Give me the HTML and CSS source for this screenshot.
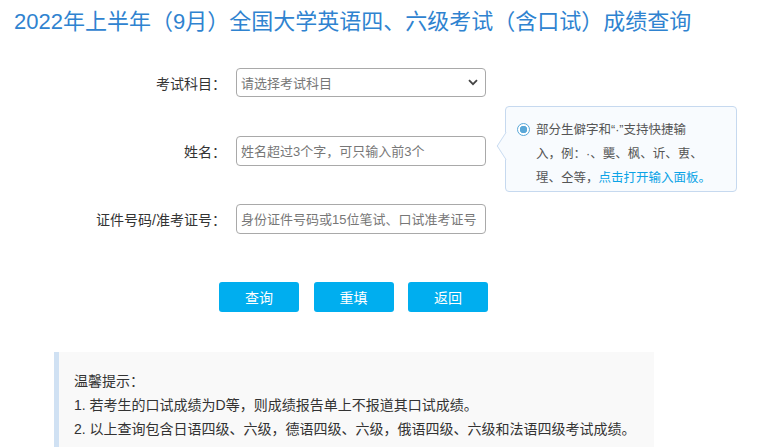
FILE: index.html
```html
<!DOCTYPE html>
<html lang="zh-CN">
<head>
<meta charset="utf-8">
<title>成绩查询</title>
<link rel="stylesheet" href="styles.css">
</head>
<body>
<h1 class="title">2022年上半年（9月）全国大学英语四、六级考试（含口试）成绩查询</h1>
<form class="form">
  <div class="row">
    <label class="label">考试科目：</label>
    <div class="field">
      <div class="select">
        <span class="ph">请选择考试科目</span>
        <svg class="chev" width="10" height="7" viewBox="0 0 10 7"><path d="M1 1.2 L5 5.2 L9 1.2" fill="none" stroke="#444" stroke-width="1.8"/></svg>
      </div>
    </div>
  </div>
  <div class="row">
    <label class="label">姓名：</label>
    <div class="field">
      <input class="input" type="text" placeholder="姓名超过3个字，可只输入前3个">
      <div class="tip">
        <span class="arrow"></span>
        <div class="tip-text"><span class="radio"></span><span class="tl">部分生僻字和“·”支持快捷输</span><span class="tl">入，例：·、龑、枫、䜣、叀、</span><span class="tl">瑆、仝等，<a class="link">点击打开输入面板。</a></span></div>
      </div>
    </div>
  </div>
  <div class="row">
    <label class="label">证件号码/准考证号：</label>
    <div class="field">
      <input class="input" type="text" placeholder="身份证件号码或15位笔试、口试准考证号">
    </div>
  </div>
  <div class="buttons">
    <button type="button" class="btn">查询</button>
    <button type="button" class="btn">重填</button>
    <button type="button" class="btn">返回</button>
  </div>
</form>
<div class="notice">
  <p>温馨提示：</p>
  <p>1. 若考生的口试成绩为D等，则成绩报告单上不报道其口试成绩。</p>
  <p>2. 以上查询包含日语四级、六级，德语四级、六级，俄语四级、六级和法语四级考试成绩。</p>
</div>
</body>
</html>
```
FILE: styles.css
```css
* { box-sizing: border-box; }
body {
  margin: 0;
  background: #fff;
  font-family: "Liberation Sans", "Noto Sans CJK SC", sans-serif;
  color: #333;
  overflow: hidden;
  text-spacing-trim: space-all;
}
.title {
  margin: 0;
  padding: 9px 0 0 14px;
  height: 36px;
  font-size: 22px;
  line-height: 26px;
  font-weight: normal;
  color: #2f83d0;
  white-space: nowrap;
}
.form {
  margin-top: 32px;
}
.row {
  display: grid;
  grid-template-columns: 226px 250px;
  column-gap: 10px;
  align-items: center;
  height: 30px;
  margin-bottom: 38px;
}
.label {
  text-align: right;
  font-size: 14px;
  color: #333;
}
.field {
  position: relative;
  height: 30px;
}
.select {
  height: 29px;
  border: 1px solid #a9a9a9;
  border-radius: 4px;
  display: flex;
  align-items: center;
  justify-content: space-between;
  padding: 0 7px 0 4px;
  font-size: 13px;
  color: #777;
}
.input {
  width: 250px;
  height: 30px;
  border: 1px solid #a9a9a9;
  border-radius: 4px;
  padding: 0 4px;
  font-family: inherit;
  font-size: 13px;
  color: #333;
  outline: none;
}
.input::placeholder { color: #777; }
.tip {
  position: absolute;
  left: 269px;
  top: -30px;
  width: 232px;
  height: 86px;
  border: 1px solid #c6d9ef;
  border-radius: 4px;
  background: #f8fbfe;
  padding: 11px 0 0 10px;
}
.arrow {
  position: absolute;
  left: -10px;
  top: 29px;
  width: 20px;
  height: 20px;
  background: #f8fbfe;
  border-left: 1px solid #c6d9ef;
  border-bottom: 1px solid #c6d9ef;
  transform: scaleX(0.65) rotate(45deg);
}
.tip-text {
  position: relative;
  font-size: 12.5px;
  line-height: 24px;
  color: #555;
  padding-left: 20px;
}
.tl {
  display: block;
  white-space: nowrap;
}
.radio {
  position: absolute;
  left: 1px;
  top: 5px;
  width: 13px;
  height: 13px;
  border: 1px solid #5aa8d8;
  border-radius: 50%;
  background: radial-gradient(circle, #5aa8d8 0 3.5px, #fff 4px);
}
.link { color: #0aa3e6; }
.buttons {
  display: flex;
  gap: 14.5px;
  padding-left: 219px;
  margin-top: 48px;
}
.btn {
  width: 80px;
  height: 30px;
  border: none;
  border-radius: 3px;
  background: #00aeef;
  color: #fff;
  font-family: inherit;
  font-size: 14px;
  padding: 0;
}
.notice {
  margin: 40px 0 0 54px;
  width: 600px;
  height: 95px;
  background: #f9f9f9;
  border-left: 5px solid #d0e1f3;
  padding: 17px 0 0 15px;
}
.notice p {
  margin: 0;
  font-size: 14px;
  line-height: 24px;
  color: #333;
}
```
